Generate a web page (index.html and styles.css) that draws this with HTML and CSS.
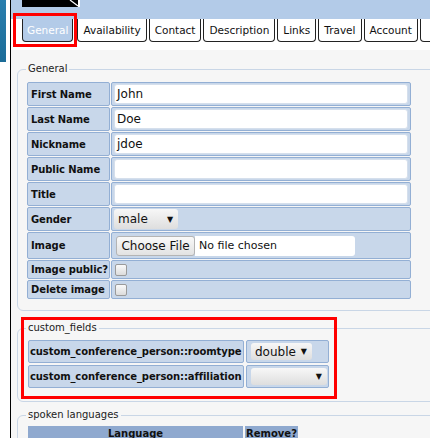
FILE: index.html
```html
<!DOCTYPE html>
<html>
<head>
<meta charset="utf-8">
<link rel="stylesheet" href="styles.css">
</head>
<body>
<div class="side"><div class="side-top"></div></div>
<div class="page">
  <div class="header">
    <svg class="logo" width="58" height="7" viewBox="0 0 58 7"><rect width="58" height="7" fill="#000"/><path d="M48 0 L56 6" stroke="#fff" stroke-width="1.2"/><rect x="56" y="0" width="2" height="7" fill="#fff"/></svg>
  </div>
  <div class="tabbar">
    <div class="tab active">General</div>
    <div class="tab">Availability</div>
    <div class="tab">Contact</div>
    <div class="tab">Description</div>
    <div class="tab">Links</div>
    <div class="tab">Travel</div>
    <div class="tab">Account</div>
    <div class="tab tab-more"></div>
    <div class="mark mark-tab"></div>
  </div>
  <div class="content">
    <fieldset class="box">
      <legend>General</legend>
      <table class="form">
        <tr><td class="lbl">First Name</td><td class="val"><div class="input">John</div></td></tr>
        <tr><td class="lbl">Last Name</td><td class="val"><div class="input">Doe</div></td></tr>
        <tr><td class="lbl">Nickname</td><td class="val"><div class="input">jdoe</div></td></tr>
        <tr><td class="lbl">Public Name</td><td class="val"><div class="input"></div></td></tr>
        <tr><td class="lbl">Title</td><td class="val"><div class="input"></div></td></tr>
        <tr><td class="lbl">Gender</td><td class="val"><div class="select gender"><span>male</span><span class="arrow">▼</span></div></td></tr>
        <tr class="img-row"><td class="lbl">Image</td><td class="val"><div class="file"><span class="file-btn">Choose File</span><span class="file-name">No file chosen</span></div></td></tr>
        <tr class="chk-row"><td class="lbl">Image public?</td><td class="val"><span class="check"></span></td></tr>
        <tr class="chk-row"><td class="lbl">Delete image</td><td class="val"><span class="check"></span></td></tr>
      </table>
    </fieldset>
    <div class="custom-wrap">
      <fieldset class="box custom">
        <legend>custom_fields</legend>
        <table class="form cf">
          <tr><td class="lbl cf-lbl">custom_conference_person::roomtype</td><td class="val cf-val"><div class="select small"><span>double</span><span class="arrow">▼</span></div></td></tr>
          <tr><td class="lbl cf-lbl">custom_conference_person::affiliation</td><td class="val cf-val"><div class="select small wide"><span></span><span class="arrow">▼</span></div></td></tr>
        </table>
      </fieldset>
      <div class="mark mark-custom"></div>
    </div>
    <fieldset class="box langs">
      <legend>spoken languages</legend>
      <table class="form lt">
        <tr><th class="th-lang">Language</th><th class="th-rem">Remove?</th></tr>
      </table>
    </fieldset>
  </div>
</div>
</body>
</html>
```

FILE: styles.css
```css
html, body {
  margin: 0;
  padding: 0;
}
body {
  width: 430px;
  height: 438px;
  overflow: hidden;
  display: flex;
  background: #fff;
  font-family: "DejaVu Sans", Verdana, sans-serif;
  color: #111;
}
.side {
  width: 10px;
  flex: none;
}
.side-top {
  width: 6px;
  height: 62px;
  background: linear-gradient(180deg, #2a7fae, #1b6c98);
}
.page {
  flex: none;
  width: 460px;
  border-left: 1px solid #000;
  position: relative;
}
.header {
  height: 19px;
  background: #b3cbe8;
  padding-left: 11px;
  box-sizing: border-box;
}
.logo {
  display: block;
}
.tabbar {
  position: relative;
  height: 31px;
  display: flex;
  padding-left: 11px;
  gap: 2px;
  background: #fff;
  box-sizing: border-box;
}
.tab {
  flex: none;
  height: 23px;
  box-sizing: border-box;
  padding: 0 5px;
  border: 1px solid #222;
  border-top: none;
  border-radius: 0 0 4px 4px;
  font-size: 10.5px;
  line-height: 23px;
  color: #111;
  background: #fff;
}
.tab.active {
  background: #b3cbe8;
  color: #fff;
  padding: 0 4px;
  margin-right: 2px;
}
.tab-more {
  width: 40px;
}
.mark {
  position: absolute;
  border: 3px solid #f00;
  box-sizing: border-box;
}
.mark-tab {
  left: 2px;
  top: -6px;
  width: 64px;
  height: 34px;
}
.content {
  background: #f6f6f6;
  padding: 13px 0 20px 6px;
  min-height: 400px;
}
.box {
  margin: 0;
  width: 440px;
  box-sizing: border-box;
  border: 1px solid #c9d6e6;
  border-radius: 6px;
  padding: 6px 8px 10px 8px;
}
.box legend {
  font-size: 10px;
  padding: 0 2px;
  line-height: 12px;
  color: #222;
}
.form {
  border-collapse: separate;
  border-spacing: 1px;
}
.lbl, .val {
  background: #c8d7ea;
  border: 1px solid #93afd4;
  border-radius: 2px;
  padding: 0;
}
.lbl {
  width: 77px;
  padding: 0 1px 0 3px;
  height: 22px;
  font-size: 10px;
  font-weight: bold;
  letter-spacing: -0.1px;
  white-space: nowrap;
}
.val {
  width: 294px;
  padding: 0 2px;
}
.input {
  width: 294px;
  height: 20px;
  box-sizing: border-box;
  background: #fff;
  border: 1px solid #d5dfec;
  border-radius: 3px;
  font-size: 12px;
  line-height: 18px;
  padding-left: 2px;
  color: #111;
}
.select {
  display: flex;
  align-items: center;
  justify-content: space-between;
  box-sizing: border-box;
  height: 20px;
  width: 64px;
  padding: 0 5px 0 4px;
  border-radius: 3px;
  background: linear-gradient(180deg, #f7f7f7, #dedede);
  font-size: 12px;
  color: #111;
}
.arrow {
  font-size: 8px;
}
.img-row .lbl {
  height: 25px;
}
.file {
  display: flex;
  align-items: center;
  height: 20px;
  padding-left: 2px;
}
.file-btn {
  box-sizing: border-box;
  height: 20px;
  width: 79px;
  display: flex;
  align-items: center;
  justify-content: center;
  border: 1px solid #b4b4b4;
  border-radius: 3px;
  background: linear-gradient(180deg, #f9f9f9, #e2e2e2);
  font-size: 12px;
}
.file-name {
  height: 20px;
  width: 160px;
  box-sizing: border-box;
  background: #fff;
  border-radius: 0 3px 3px 0;
  font-size: 11px;
  line-height: 20px;
  padding-left: 4px;
}
.chk-row .lbl {
  height: 17px;
}
.check {
  display: block;
  width: 10px;
  height: 10px;
  margin-left: 1px;
  border: 1px solid #9a9a9a;
  border-radius: 2px;
  background: linear-gradient(180deg, #fafafa, #dcdcdc);
}
.custom-wrap {
  position: relative;
  margin-top: 11px;
}
.custom {
  padding-top: 4px;
  padding-bottom: 11px;
}
.cf {
  border-spacing: 2px;
}
.cf-lbl {
  width: 212px;
  height: 21px;
  padding: 0 1px;
}
.cf-val {
  width: 77px;
  padding: 0 0 0 4px;
}
.select.small {
  height: 17px;
  width: 61px;
}
.select.wide {
  width: 76px;
}
.mark-custom {
  left: 4px;
  top: -5px;
  width: 316px;
  height: 82px;
}
.langs {
  margin-top: 7px;
  padding-top: 3px;
}
.lt {
  border-spacing: 2px;
}
.lt th {
  background: #8fa9cf;
  font-size: 10px;
  font-weight: bold;
  height: 14px;
  padding: 0;
  color: #111;
}
.th-lang {
  width: 215px;
}
.th-rem {
  width: 53px;
}
```
